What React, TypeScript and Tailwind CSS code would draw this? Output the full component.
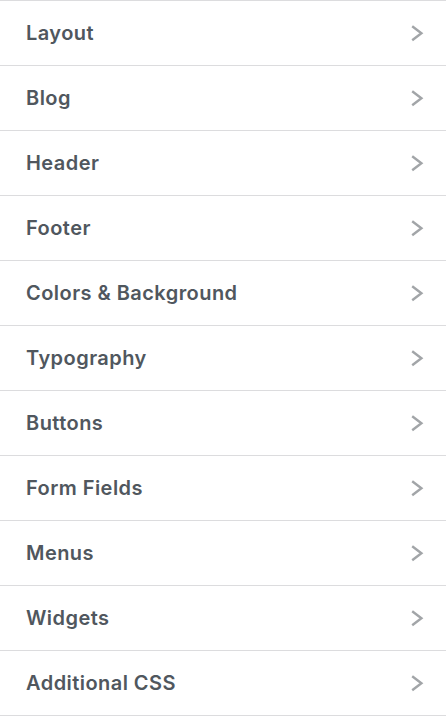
const sections = [
  'Layout',
  'Blog',
  'Header',
  'Footer',
  'Colors & Background',
  'Typography',
  'Buttons',
  'Form Fields',
  'Menus',
  'Widgets',
  'Additional CSS',
];

function Chevron() {
  return (
    <svg width="16" height="18" viewBox="0 0 16 18" fill="none" className="shrink-0">
      <path d="M2.2 2.2 L11.4 9.2 L2.2 16.2" stroke="#a2a5a8" strokeWidth="2.4" />
    </svg>
  );
}

export default function App() {
  return (
    <div className="w-[446px] bg-white" style={{ fontFamily: 'Inter, "Noto Sans", sans-serif' }}>
      <ul className="border-b border-[#dcdcde]">
        {sections.map((s) => (
          <li
            key={s}
            className="flex h-[65px] items-center justify-between border-t border-[#dcdcde] pl-[26px] pr-[20px]"
          >
            <span className="text-[20px] font-semibold tracking-[0.45px] text-[#50575e]">{s}</span>
            <Chevron />
          </li>
        ))}
      </ul>
    </div>
  );
}
